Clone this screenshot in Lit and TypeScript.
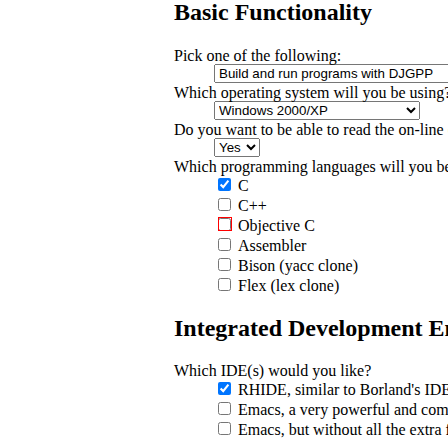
import { LitElement, html, css } from "lit";
import { customElement } from "lit/decorators.js";

interface Choice {
  label: string;
  checked?: boolean;
  marked?: boolean;
}

const languages: Choice[] = [
  { label: "C", checked: true },
  { label: "C++" },
  { label: "Objective C", marked: true },
  { label: "Assembler" },
  { label: "Bison (yacc clone)" },
  { label: "Flex (lex clone)" },
];

const ides: Choice[] = [
  { label: "RHIDE, similar to Borland's IDE", checked: true },
  { label: "Emacs, a very powerful and complex program" },
  { label: "Emacs, but without all the extra files" },
];

@customElement("app-root")
export class AppRoot extends LitElement {
  static styles = css`
    :host {
      display: block;
      overflow: hidden;
      background: #fff;
      color: #000;
      font: 16px/18px "Liberation Serif", "Times New Roman", serif;
    }
    .form {
      padding-left: 174px;
      white-space: nowrap;
    }
    .title {
      margin: 20px 0;
      font-size: 24px;
      line-height: 26px;
      font-weight: bold;
    }
    .title:first-child {
      margin: 0 0 22px;
      line-height: 24px;
    }
    .question {
      display: block;
      padding: 2px 0 0;
      line-height: 16px;
    }
    .group {
      margin: 0;
      padding: 0;
      border: 0;
    }
    .answer {
      padding-left: 40px;
    }
    .drop {
      display: block;
      height: 19px;
      margin: 0;
      font-family: "Liberation Sans", Arial, sans-serif;
    }
    .system {
      width: 206px;
    }
    .program {
      width: 280px;
    }
    .yesno {
      width: 46px;
    }
    .choice {
      display: flex;
      align-items: flex-end;
      gap: 7px;
      height: 20px;
      padding-left: 4px;
    }
    .tick {
      flex: none;
      width: 13px;
      height: 13px;
      margin: 0 0 4px;
    }
    .marked {
      position: relative;
    }
    .marked::before {
      content: "";
      position: absolute;
      left: 4px;
      top: 2px;
      width: 12px;
      height: 12px;
      border: 1px solid #f00;
      z-index: 1;
      pointer-events: none;
    }
  `;

  private choices(name: string, question: string, items: Choice[]) {
    return html`<fieldset class="group">
      <legend class="question">${question}</legend>
      <div class="answer">
        ${items.map(
          (item) => html`<label class="choice ${item.marked ? "marked" : ""}"
            ><input
              type="checkbox"
              name=${name}
              class="tick"
              .checked=${!!item.checked}
            /><span>${item.label}</span></label
          >`,
        )}
      </div>
    </fieldset>`;
  }

  private drop(id: string, question: string, options: string[]) {
    return html`<label class="question" for=${id}>${question}</label>
      <div class="answer">
        <select id=${id} class="drop ${id}">
          ${options.map((text) => html`<option>${text}</option>`)}
        </select>
      </div>`;
  }

  render() {
    return html`<form class="form">
      <h2 class="title">Basic Functionality</h2>
      ${this.drop("program", "Pick one of the following:", ["Build and run programs with DJGPP"])}
      ${this.drop("system", "Which operating system will you be using?", ["Windows 2000/XP"])}
      ${this.drop("yesno", "Do you want to be able to read the on-line documentation?", ["Yes", "No"])}
      ${this.choices("language", "Which programming languages will you be using?", languages)}
      <h2 class="title">Integrated Development Environments</h2>
      ${this.choices("ide", "Which IDE(s) would you like?", ides)}
    </form>`;
  }
}
